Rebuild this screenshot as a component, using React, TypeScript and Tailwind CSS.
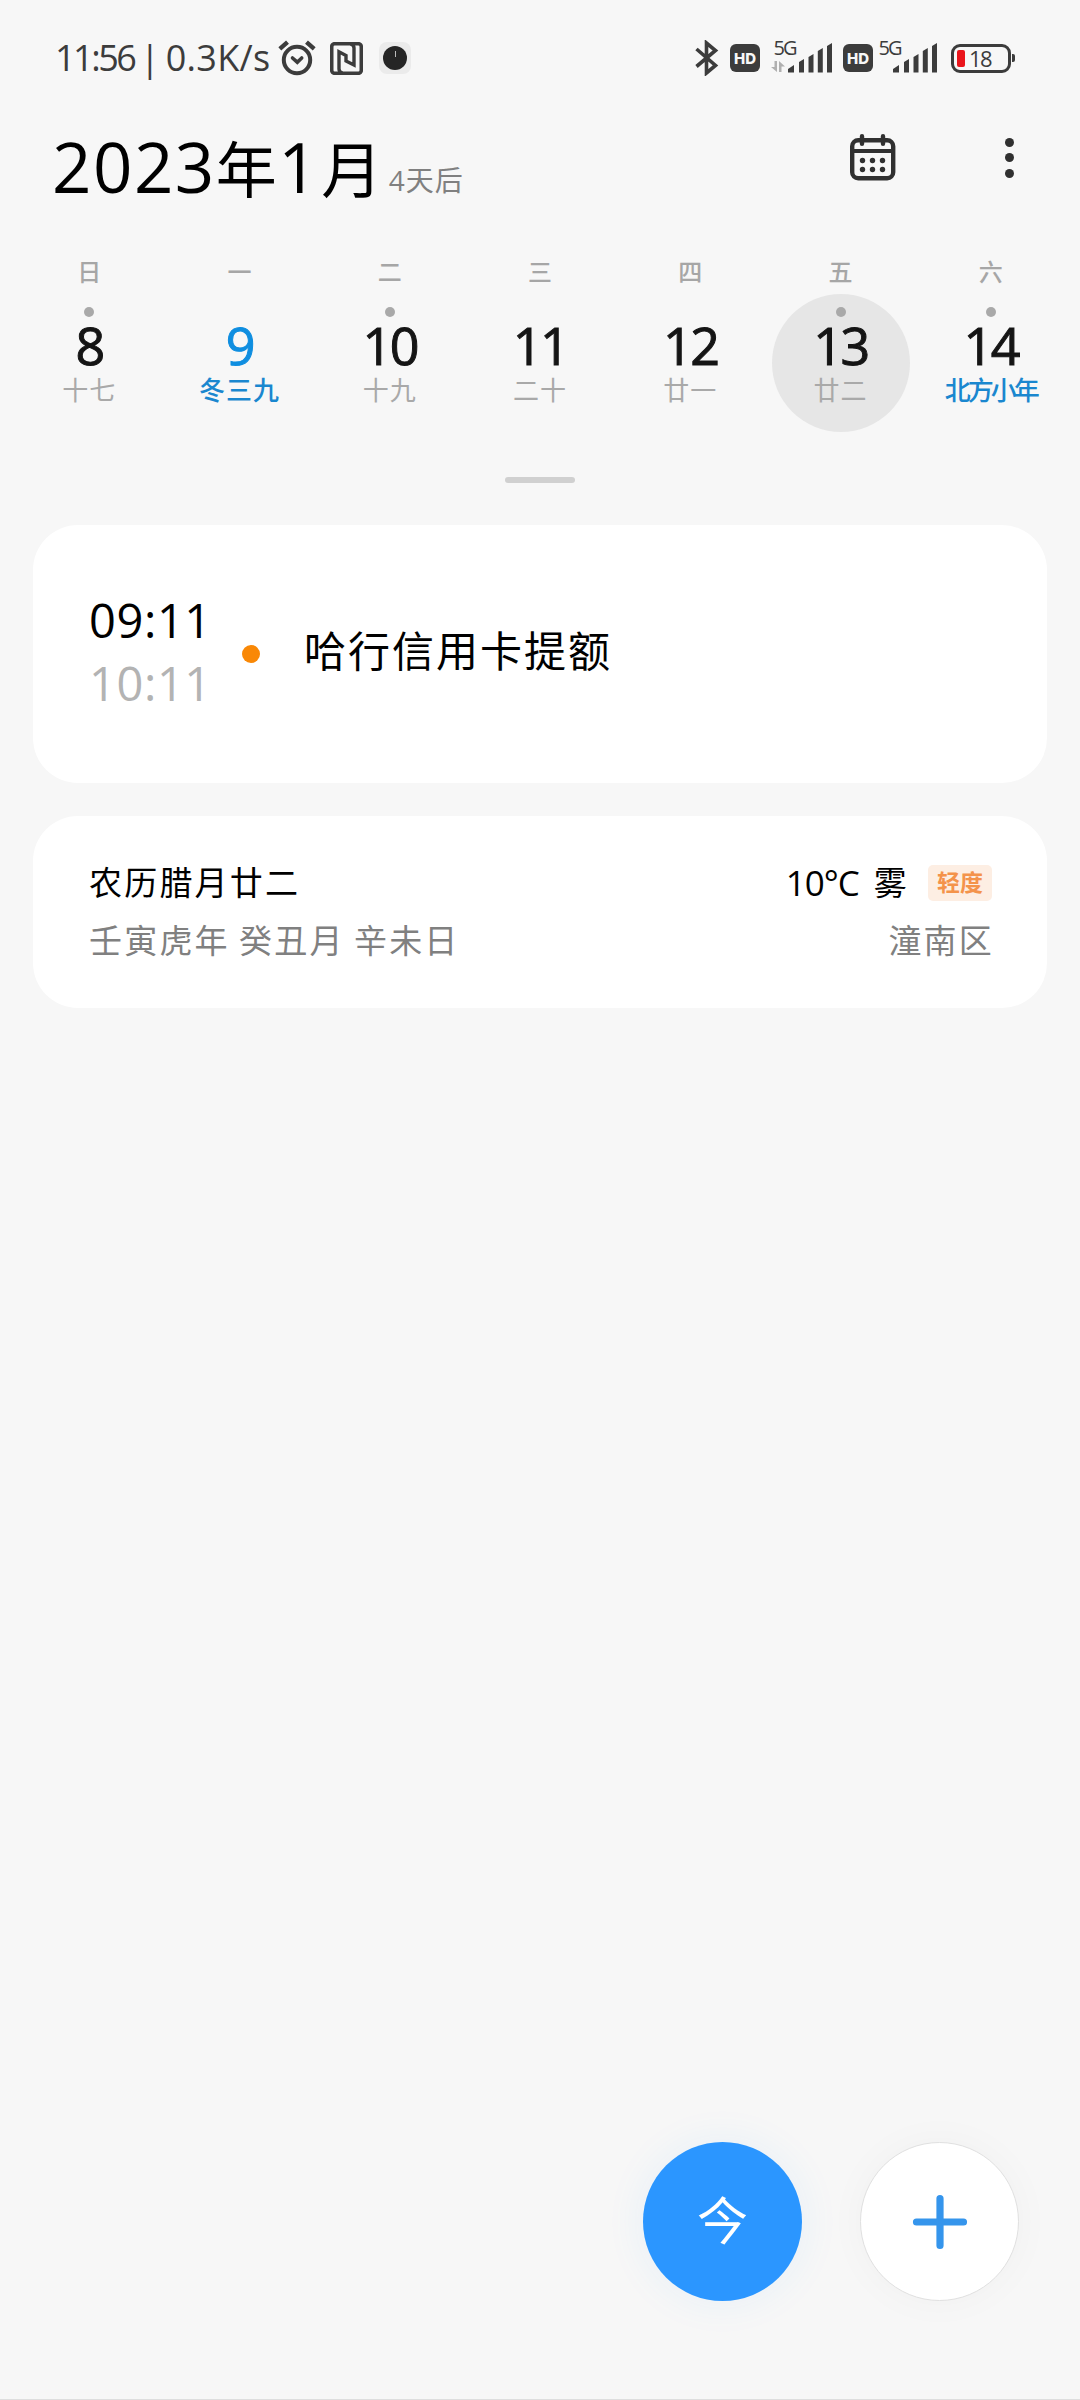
type Day = {
  week: string;
  date: number;
  lunar: string;
  dot?: boolean;
  today?: boolean;
  selected?: boolean;
  festival?: boolean;
};

const days: Day[] = [
  { week: "日", date: 8, lunar: "十七", dot: true },
  { week: "一", date: 9, lunar: "冬三九", today: true },
  { week: "二", date: 10, lunar: "十九", dot: true },
  { week: "三", date: 11, lunar: "二十" },
  { week: "四", date: 12, lunar: "廿一" },
  { week: "五", date: 13, lunar: "廿二", dot: true, selected: true },
  { week: "六", date: 14, lunar: "北方小年", dot: true, festival: true },
];

const AlarmIcon = () => (
  <svg width="40" height="38" viewBox="0 0 40 38" fill="none" stroke="#3c3c3c" strokeLinecap="round">
    <circle cx="20" cy="21" r="13.2" strokeWidth="4" />
    <path d="M2.8 9.8 10.5 3.2M37.2 9.8 29.5 3.2" strokeWidth="4.4" strokeLinecap="butt" />
    <path d="m15.5 19 4.8 4.2 4.4-4.2" strokeWidth="3.6" />
  </svg>
);

const NfcIcon = () => (
  <svg width="33" height="33" viewBox="0 0 33 33" fill="none" stroke="#3c3c3c">
    <rect x="1.7" y="1.7" width="29.6" height="29.6" rx="3" strokeWidth="3.6" />
    <path
      d="M12.5 31c-2.500-.5-3.500-2-3.500-4V9.800l7 3.700v4M20.500 2c2.500.5 3.500 2 3.500 4v17l-8-4v-4"
      strokeWidth="3.4"
    />
  </svg>
);

const BluetoothIcon = () => (
  <svg width="24" height="36" viewBox="0 0 24 36" fill="none" stroke="#3c3c3c" strokeWidth="3.6">
    <path d="M1.5 9 20.5 25.5 11.5 33V3l9 7.5L1.5 26.5" strokeLinejoin="miter" />
  </svg>
);

const HdIcon = () => (
  <div className="flex h-[28px] w-[30px] items-center justify-center rounded-[6px] bg-[#3c3c3c] font-[Inter] text-[15px] leading-none font-extrabold text-[#f7f7f7]">
    HD
  </div>
);

const SignalIcon = ({ data = false }: { data?: boolean }) => (
  <svg
    width={data ? 62 : 60}
    height="56"
    viewBox={data ? "0 -10 62 56" : "2 -10 60 56"}
    fill="#3c3c3c"
  >
    <text x="2.5" y="15" fontFamily="Open Sans" fontSize="20" textLength="24">
      5G
    </text>
    {data && <path d="M0 27h3.5v-6h2.5v11zM8 32V21l6 5.5h-3.5V32z" fill="#b0b0b0" />}
    <path d="M17 29l6-4v7.5h-6zM28 22l5-3v13.5h-5zM37.5 17l5-3v18.5h-5zM46.8 11l5-3v24.5h-5zM56 6l5-3v29.5h-5z" />
  </svg>
);

const BatteryIcon = () => (
  <div className="flex items-center">
    <div className="flex h-[29px] w-[60px] items-center rounded-[9px] border-[3px] border-[#3c3c3c] pl-[3px]">
      <div className="h-[17px] w-[8px] rounded-[2px] bg-[#ea151b]" />
      <span className="ml-[4px] text-[22px] leading-none tracking-[-1.5px]">18</span>
    </div>
    <div className="ml-[1px] h-[8px] w-[3px] rounded-r-[2px] bg-[#3c3c3c]" />
  </div>
);

const StatusBar = () => (
  <div className="flex h-[116px] items-center justify-between pr-[65px] pl-[55px] text-[#3c3c3c]">
    <div className="flex items-center">
      <span className="w-[222px] text-[36px] leading-[36px] tracking-[0.3px] whitespace-nowrap [word-spacing:-4px]">
        <span className="tracking-[-2.5px]">11:56</span> | 0.3K/s
      </span>
      <AlarmIcon />
      <div className="ml-[13px]">
        <NfcIcon />
      </div>
      <div className="ml-[16px] flex size-[32px] items-center justify-center rounded-[8px] bg-[#ebebeb]">
        <div className="flex size-[24px] justify-center rounded-full bg-[#252525] pt-[5px]">
          <div className="h-[6px] w-px bg-[#bbb]" />
        </div>
      </div>
    </div>
    <div className="flex items-center">
      <BluetoothIcon />
      <div className="ml-[11px]">
        <HdIcon />
      </div>
      <div className="ml-[11px]">
        <SignalIcon data />
      </div>
      <div className="ml-[10px]">
        <HdIcon />
      </div>
      <div className="ml-[5px]">
        <SignalIcon />
      </div>
      <div className="ml-[13px]">
        <BatteryIcon />
      </div>
    </div>
  </div>
);

const Header = () => (
  <header className="flex h-[132px] items-start justify-between pr-[66px] pl-[52px]">
    <h1 className="mt-[10px] text-[69px] leading-[80px] tracking-[1.5px] whitespace-nowrap">
      2023<span className="text-[61px] leading-none">年</span>1
      <span className="ml-[2px] text-[61px] leading-none">月</span>
      <span className="ml-[5px] align-[2px] text-[28px] leading-none tracking-[1px] text-[#808080]">
        4天后
      </span>
    </h1>
    <div className="mt-[18px] flex items-center">
      <svg width="46" height="47" viewBox="0 0 46 47" fill="none" stroke="#303030">
        <rect x="2.2" y="6.2" width="41" height="38" rx="6" strokeWidth="4.4" />
        <path d="M2 17h41" strokeWidth="4.2" />
        <path d="M12 2.2v7.6M33 2.2v7.6" strokeWidth="4.4" strokeLinecap="round" />
        <g fill="#303030" stroke="none">
          <circle cx="12.5" cy="26.5" r="2.7" />
          <circle cx="22.5" cy="26.5" r="2.7" />
          <circle cx="32.5" cy="26.5" r="2.7" />
          <circle cx="12.5" cy="35.5" r="2.7" />
          <circle cx="22.5" cy="35.5" r="2.7" />
          <circle cx="32.5" cy="35.5" r="2.7" />
        </g>
      </svg>
      <div className="ml-[109px] flex flex-col gap-[6.5px]">
        <div className="size-[9px] rounded-full bg-[#303030]" />
        <div className="size-[9px] rounded-full bg-[#303030]" />
        <div className="size-[9px] rounded-full bg-[#303030]" />
      </div>
    </div>
  </header>
);

const DayCell = ({ day }: { day: Day }) => (
  <div className="flex flex-col items-center">
    <div className="h-[46px] text-[24px] leading-[47px] font-medium text-[#a6a6a6]">{day.week}</div>
    <div
      className={`flex size-[138px] flex-col items-center rounded-full pt-[13px] ${
        day.selected ? "bg-[#e6e6e6]" : ""
      }`}
    >
      <div className={`size-[10px] rounded-full ${day.dot ? "bg-[#a9a9a9]" : ""}`} />
      <div
        className={`mt-[4px] text-[52px] leading-[48px] font-medium tracking-[-2.5px] [-webkit-text-stroke:1px] ${
          day.today ? "text-[#0f8ee0]" : "text-[#151515]"
        }`}
      >
        {day.date}
      </div>
      <div
        className={`mt-[2px] text-[26px] leading-[39px] whitespace-nowrap ${
          day.festival ? "tracking-[-3px]" : "tracking-[1px]"
        } ${day.today || day.festival ? "font-medium text-[#1a87cf]" : "text-[#a9a9a9]"}`}
      >
        {day.lunar}
      </div>
    </div>
  </div>
);

const EventCard = () => (
  <section className="flex h-[258px] items-center rounded-[45px] bg-white px-[56px]">
    <div className="w-[114px] pb-[5px] text-[47px] leading-[63px] tracking-[0.6px] whitespace-nowrap">
      <div>09:11</div>
      <div className="text-[#b3b3b3]">10:11</div>
    </div>
    <div className="ml-[39px] size-[18px] rounded-full bg-[#f98806]" />
    <div className="ml-[44px] pb-[6px] text-[42px] leading-[60px] tracking-[2px]">哈行信用卡提额</div>
  </section>
);

const LunarCard = () => (
  <section className="mt-[33px] flex h-[192px] justify-between rounded-[45px] bg-white pt-[38px] pr-[55px] pl-[56px] text-[33px] leading-[58px] tracking-[2.2px]">
    <div>
      <div>农历腊月廿二</div>
      <div className="text-[#808080] [word-spacing:-1.5px]">壬寅虎年 癸丑月 辛未日</div>
    </div>
    <div className="flex flex-col items-end">
      <div className="flex items-center">
        <span className="text-[35px] tracking-[-1px]">10°C</span>
        <span className="ml-[15px]">雾</span>
        <span className="ml-[19px] h-[36px] w-[64px] rounded-[5px] bg-[#fdeee3] text-center text-[23px] leading-[34px] font-bold tracking-normal text-[#f4934b]">
          轻度
        </span>
      </div>
      <div className="-mr-[2px] text-[#808080]">潼南区</div>
    </div>
  </section>
);

const App = () => {
  return (
    <main className="flex h-[2400px] w-[1080px] flex-col border-b border-[#dedede] bg-[#f7f7f7] font-['Open_Sans','Noto_Sans_CJK_SC',sans-serif] text-black">
      <StatusBar />
      <Header />
      <div className="grid grid-cols-7 px-[14px]">
        {days.map((day) => (
          <DayCell key={day.date} day={day} />
        ))}
      </div>
      <div className="mx-auto mt-[45px] h-[6px] w-[70px] rounded-full bg-[#d0d0d0]" />
      <div className="mt-[42px] px-[33px]">
        <EventCard />
        <LunarCard />
      </div>
      <div className="mt-auto mb-[98px] flex justify-end gap-[58px] pr-[61px]">
        <button className="size-[159px] rounded-full bg-[#2b96ff] pb-[3px] text-[51px] leading-[50px] text-white shadow-[0_0_40px_rgba(43,150,255,0.08)]">
          今
        </button>
        <button className="flex size-[159px] items-center justify-center rounded-full border border-[#e0e0e0] bg-white shadow-[0_0_40px_rgba(0,0,0,0.03)]">
          <svg width="56" height="56" viewBox="0 0 56 56" stroke="#3595ec" strokeWidth="7.2" strokeLinecap="round">
            <path d="M28 4.5v47M4.5 28h47" />
          </svg>
        </button>
      </div>
    </main>
  );
};

export default App;
